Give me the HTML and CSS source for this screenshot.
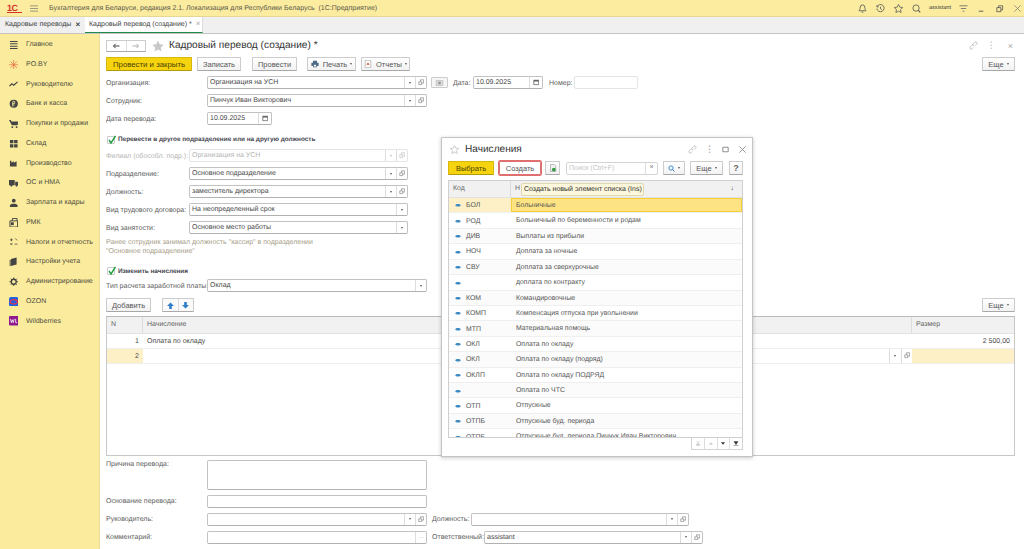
FILE: index.html
```html
<!DOCTYPE html>
<html lang="ru">
<head>
<meta charset="utf-8">
<title>Кадровый перевод</title>
<link rel="stylesheet" href="styles.css">
</head>
<body>
<svg class="defs" width="0" height="0" aria-hidden="true">
  <symbol id="open" viewBox="0 0 8 8"><path d="M1 3.500h3.500V7H1zM3 3V1h4v4H5" fill="none" stroke="#888" stroke-width=".9"/></symbol>
  <symbol id="cal" viewBox="0 0 8 8"><path d="M1 1.500h6v5.500H1z" fill="none" stroke="#555" stroke-width=".9"/><path d="M1 1.500h6v1.700H1z" fill="#555"/></symbol>
  <symbol id="link" viewBox="0 0 10 10"><path d="M1.500 8.500a1.300 1.300 0 0 1 0-2l1.500-1.500a1.300 1.300 0 0 1 2 0M8.500 1.500a1.300 1.300 0 0 0-2 0L5 3a1.300 1.300 0 0 0 0 2M1.500 8.500a1.300 1.300 0 0 0 2 0L5 7M8.500 1.500a1.300 1.300 0 0 1 0 2L7 5" fill="none" stroke="#aaa" stroke-width=".8"/></symbol>
  <symbol id="star" viewBox="0 0 12 12"><path d="M6 .5l1.700 3.700 4 .5-3 2.700.8 4L6 9.500l-3.500 1.900.8-4-3-2.700 4-.5z"/></symbol>
  <symbol id="rowdot" viewBox="0 0 7 5"><path d="M0 2.500L2 1h3l2 1.500L5 4H2z" fill="#3c8ac4"/></symbol>
</svg>

<div class="app">
  <header class="topbar">
    <span class="logo">1С</span>
    <svg class="burger" viewBox="0 0 9 7"><path d="M0 .5h9M0 3.500h9M0 6.500h9" stroke="#777" stroke-width=".8"/></svg>
    <span class="apptitle">Бухгалтерия для Беларуси, редакция 2.1. Локализация для Республики Беларусь&nbsp; (1С:Предприятие)</span>
    <div class="topicons">
      <svg class="ti" viewBox="0 0 10 10"><path d="M5 1a2.500 2.500 0 0 0-2.500 2.500c0 2.500-1.300 3.500-1.300 4h7.600c0-.5-1.300-1.500-1.300-4A2.500 2.500 0 0 0 5 1zM4 9h2" fill="none" stroke="#555" stroke-width=".9"/></svg>
      <svg class="ti" viewBox="0 0 10 10"><path d="M1.300 3a4 4 0 1 1-.3 2M1 1.300V3.200h1.900M5 3v2.300l1.500 1" fill="none" stroke="#555" stroke-width=".9"/></svg>
      <svg class="ti" viewBox="0 0 12 12"><use href="#star" fill="none" stroke="#555"/></svg>
      <svg class="ti" viewBox="0 0 10 10"><circle cx="4.500" cy="4.500" r="3.500" fill="none" stroke="#555" stroke-width=".9"/><path d="M7 7l2.200 2.200" stroke="#555" stroke-width="1.200"/></svg>
      <span class="user">assistant</span>
      <svg class="ti" viewBox="0 0 10 10"><path d="M.5 2h9M2 5h6M4 8h2" stroke="#666" stroke-width=".9"/></svg>
      <svg class="ti wc" viewBox="0 0 10 10"><path d="M2 8h5" stroke="#555" stroke-width="1"/></svg>
      <svg class="ti wc" viewBox="0 0 10 10"><path d="M2 4h4.500v4.500H2zM4 4V2h4.500v4.500H6.500" fill="none" stroke="#555" stroke-width=".9"/></svg>
      <svg class="ti wc" viewBox="0 0 10 10"><path d="M1.500 1.500l7 7M8.500 1.500l-7 7" stroke="#777" stroke-width=".8"/></svg>
    </div>
  </header>

  <nav class="tabs">
    <div class="tab">Кадровые переводы <span class="tabx dark">×</span></div>
    <div class="tab active">Кадровый перевод (создание) * <span class="tabx">×</span></div>
  </nav>

  <div class="body">
    <aside class="side">
      <div class="sitem"><svg class="si" viewBox="0 0 10 10"><path d="M1 1.500h8M1 4h8M1 6.500h8M1 9h8" stroke="#444" stroke-width="1.100"/></svg>Главное</div>
      <div class="sitem"><svg class="si" viewBox="0 0 10 10"><path d="M5 0v10M0 5h10M1.500 1.500l7 7M8.500 1.500l-7 7" stroke="#e2603a" stroke-width=".7"/></svg>PO.BY</div>
      <div class="sitem"><svg class="si" viewBox="0 0 10 10"><path d="M.5 7.500l2.500-2.500 2 1.500 4-3.500" fill="none" stroke="#444" stroke-width="1.300"/></svg>Руководителю</div>
      <div class="sitem"><svg class="si" viewBox="0 0 10 10"><circle cx="5" cy="5" r="4.300" fill="#444"/><path d="M4 8V2.500h2v2.200H3.300M3.300 6.300h2.500" fill="none" stroke="#fbed9d" stroke-width=".8"/></svg>Банк и касса</div>
      <div class="sitem"><svg class="si" viewBox="0 0 10 10"><path d="M0 1h2l.5 1.500h7.500L9 6.500H3z" fill="#444"/><circle cx="3.500" cy="8.500" r="1" fill="#444"/><circle cx="8" cy="8.500" r="1" fill="#444"/></svg>Покупки и продажи</div>
      <div class="sitem"><svg class="si" viewBox="0 0 10 10"><path d="M1 1h3.600v3.600H1zM5.400 1H9v3.600H5.400zM1 5.400h3.600V9H1zM5.400 5.400H9V9H5.400z" fill="#444"/></svg>Склад</div>
      <div class="sitem"><svg class="si" viewBox="0 0 10 10"><path d="M1 9V3h1.500v2L5 3.500V5l3-1.500V9z" fill="#444"/></svg>Производство</div>
      <div class="sitem"><svg class="si" viewBox="0 0 10 10"><path d="M0 2h6v5.500H0zM6.500 4H9l1 1.800v1.700H6.500z" fill="#444"/><circle cx="2.500" cy="8" r="1.100" fill="#444"/><circle cx="8" cy="8" r="1.100" fill="#444"/></svg>ОС и НМА</div>
      <div class="sitem"><svg class="si" viewBox="0 0 10 10"><circle cx="5" cy="2.800" r="2" fill="#444"/><path d="M1 9.500V8c0-1.300 2-2 4-2s4 .7 4 2v1.500z" fill="#444"/></svg>Зарплата и кадры</div>
      <div class="sitem"><svg class="si" viewBox="0 0 10 10"><path d="M1 3h8v6.500H1zM3.500 3V.5h5V3" fill="none" stroke="#444" stroke-width="1"/><path d="M2 4.500h3v3H2z" fill="#444"/></svg>РМК</div>
      <div class="sitem"><svg class="si" viewBox="0 0 10 10"><path d="M1 3h3M2.500 1.500v3M6 7.500h3M1.500 6.500l2 2M3.500 6.500l-2 2M6.500 1.500l2 2" stroke="#444" stroke-width=".8"/></svg>Налоги и отчетность</div>
      <div class="sitem"><svg class="si" viewBox="0 0 10 10"><path d="M2 2l6-1.500V8L2 9.500z" fill="#444"/><path d="M1.200 3v6.500" stroke="#444"/></svg>Настройки учета</div>
      <div class="sitem"><svg class="si" viewBox="0 0 10 10"><circle cx="5" cy="5" r="2.600" fill="none" stroke="#444" stroke-width="1.400"/><path d="M5 .5v2M5 7.500v2M.5 5h2M7.500 5h2M1.800 1.800l1.400 1.400M6.800 6.800l1.400 1.400M8.200 1.800L6.800 3.200M3.200 6.800L1.800 8.200" stroke="#444" stroke-width="1"/></svg>Администрирование</div>
      <div class="sitem"><svg class="si" viewBox="0 0 10 10"><rect width="10" height="10" rx="2" fill="#1f62e0"/><ellipse cx="5" cy="5" rx="3.800" ry="2.300" fill="none" stroke="#e8304c" stroke-width="1.300"/></svg>OZON</div>
      <div class="sitem"><svg class="si" viewBox="0 0 10 10"><rect width="10" height="10" rx="1" fill="#8f1a8f"/><path d="M1.500 3l1 4 1-3 1 3 1-4M7 3v4h1.500" fill="none" stroke="#fff" stroke-width=".8"/></svg>Wildberries</div>
    </aside>

    <main class="main">
      <div class="titlerow">
        <div class="navbtns">
          <span class="navb"><svg viewBox="0 0 9 7"><path d="M8.500 3.500H2M4 1L1.500 3.500 4 6" fill="none" stroke="#333" stroke-width="1.100"/></svg></span>
          <span class="navb"><svg viewBox="0 0 9 7"><path d="M.5 3.500H7M5 1l2.500 2.500L5 6" fill="none" stroke="#aaa" stroke-width="1.100"/></svg></span>
        </div>
        <svg class="bigstar" viewBox="0 0 12 12"><use href="#star" fill="#c8c8c8"/></svg>
        <h1 class="doctitle">Кадровый перевод (создание) *</h1>
        <div class="winicons">
          <svg class="wi" viewBox="0 0 10 10"><use href="#link"/></svg>
          <span class="wdots">⋮</span>
          <span class="wx">×</span>
        </div>
      </div>

      <div class="toolbar">
        <button class="btn primary w86 large">Провести и закрыть</button>
        <button class="btn w44 ml5">Записать</button>
        <button class="btn w45 ml11">Провести</button>
        <button class="btn w49 ml10"><svg class="bi" viewBox="0 0 10 10"><path d="M2.500 1h5v2.500h-5zM.5 3.500h9v4h-2V9h-5V7.500h-2z" fill="#4a6a85"/><path d="M3.500 6h3v2.200h-3z" fill="#fff"/></svg>Печать <i class="tri"></i></button>
        <button class="btn w49 ml5"><svg class="bi" viewBox="0 0 10 10"><path d="M1.500 .5h7v9h-7z" fill="#fff" stroke="#999" stroke-width=".7"/><path d="M3 6l2-3 2 3z" fill="#d0452f"/></svg>Отчеты <i class="tri"></i></button>
        <button class="btn w33 push">Еще <i class="tri"></i></button>
      </div>

      <div class="row r1">
        <label class="lbl l101">Организация:</label>
        <div class="field w220"><span class="val">Организация на УСН</span><span class="cell"><i class="tri"></i></span><span class="cell"><svg class="ci"><use href="#open"/></svg></span></div>
        <button class="docbtn"><svg viewBox="0 0 10 7"><path d="M1 .5h8v6H1z" fill="#ddd" stroke="#aaa" stroke-width=".6"/><path d="M3.500 2h3v3h-3z" fill="#999"/></svg></button>
        <label class="lbl ml5 date-l">Дата:</label>
        <div class="field w70"><span class="val">10.09.2025</span><span class="cell c-w"><svg class="ci"><use href="#cal"/></svg></span></div>
        <label class="lbl ml6 num-l">Номер:</label>
        <div class="field w64 pale"></div>
      </div>
      <div class="row">
        <label class="lbl l101">Сотрудник:</label>
        <div class="field w220"><span class="val">Пинчук Иван Викторович</span><span class="cell"><i class="tri"></i></span><span class="cell"><svg class="ci"><use href="#open"/></svg></span></div>
      </div>
      <div class="row">
        <label class="lbl l101">Дата перевода:</label>
        <div class="field w65"><span class="val">10.09.2025</span><span class="cell c-w"><svg class="ci"><use href="#cal"/></svg></span></div>
      </div>

      <div class="check c1"><span class="box"><svg viewBox="0 0 10 10"><path d="M2 5l2 3 4.500-7" fill="none" stroke="#1f9d3f" stroke-width="1.400"/></svg></span><b>Перевести в другое подразделение или на другую должность</b></div>

      <div class="row">
        <label class="lbl l83 faint">Филиал (обособл. подр.):</label>
        <div class="field w219 pale"><span class="val faint">Организация на УСН</span><span class="cell"><i class="tri lt"></i></span><span class="cell"><svg class="ci lt"><use href="#open"/></svg></span></div>
      </div>
      <div class="row">
        <label class="lbl l83">Подразделение:</label>
        <div class="field w219"><span class="val">Основное подразделение</span><span class="cell"><i class="tri"></i></span><span class="cell"><svg class="ci"><use href="#open"/></svg></span></div>
      </div>
      <div class="row">
        <label class="lbl l83">Должность:</label>
        <div class="field w219"><span class="val">заместитель директора</span><span class="cell"><i class="tri"></i></span><span class="cell"><svg class="ci"><use href="#open"/></svg></span></div>
      </div>
      <div class="row">
        <label class="lbl l83">Вид трудового договора:</label>
        <div class="field w219"><span class="val">На неопределенный срок</span><span class="cell"><i class="tri"></i></span></div>
      </div>
      <div class="row">
        <label class="lbl l83">Вид занятости:</label>
        <div class="field w219"><span class="val">Основное место работы</span><span class="cell"><i class="tri"></i></span></div>
      </div>

      <p class="note">Ранее сотрудник занимал должность "кассир" в подразделении<br>"Основное подразделение"</p>

      <div class="check c2"><span class="box"><svg viewBox="0 0 10 10"><path d="M2 5l2 3 4.500-7" fill="none" stroke="#1f9d3f" stroke-width="1.400"/></svg></span><b>Изменить начисления</b></div>

      <div class="row">
        <label class="lbl l101">Тип расчета заработной платы:</label>
        <div class="field w220"><span class="val">Оклад</span><span class="cell"><i class="tri"></i></span></div>
      </div>

      <div class="toolbar t2">
        <button class="btn w45">Добавить</button>
        <div class="arrows">
          <span class="arr"><svg viewBox="0 0 8 8"><path d="M4 .5L8 4.500H5.500V8h-3V4.500H0z" fill="#2f80c8"/></svg></span>
          <span class="arr"><svg viewBox="0 0 8 8"><path d="M4 7.500L8 3.500H5.500V0h-3v3.500H0z" fill="#2f80c8"/></svg></span>
        </div>
        <button class="btn w33 push">Еще <i class="tri"></i></button>
      </div>

      <div class="table">
        <div class="thead">
          <div class="th c-n">N</div>
          <div class="th c-name">Начисление</div>
          <div class="th c-size">Размер</div>
        </div>
        <div class="tr">
          <div class="td c-n num">1</div>
          <div class="td c-name">Оплата по окладу</div>
          <div class="td c-size num">2 500,00</div>
        </div>
        <div class="tr">
          <div class="td c-n num hl">2</div>
          <div class="td c-name editing"><span class="cell"><i class="tri"></i></span><span class="cell"><svg class="ci"><use href="#open"/></svg></span></div>
          <div class="td c-size hl"></div>
        </div>
      </div>

      <div class="row tall">
        <label class="lbl l101 top">Причина перевода:</label>
        <div class="field w220 high"></div>
      </div>
      <div class="row">
        <label class="lbl l101">Основание перевода:</label>
        <div class="field w220"></div>
      </div>
      <div class="row">
        <label class="lbl l101">Руководитель:</label>
        <div class="field w220"><span class="val"></span><span class="cell"><i class="tri"></i></span><span class="cell"><svg class="ci"><use href="#open"/></svg></span></div>
        <label class="lbl ml5 pos-l">Должность:</label>
        <div class="field w218"><span class="val"></span><span class="cell"><i class="tri"></i></span><span class="cell"><svg class="ci"><use href="#open"/></svg></span></div>
      </div>
      <div class="row">
        <label class="lbl l101">Комментарий:</label>
        <div class="field w220"><span class="val"></span><span class="cell dots">...</span></div>
        <label class="lbl ml5 resp-l">Ответственный:</label>
        <div class="field w219"><span class="val">assistant</span><span class="cell"><i class="tri"></i></span><span class="cell"><svg class="ci"><use href="#open"/></svg></span></div>
      </div>
    </main>
  </div>
</div>

<section class="dialog">
  <div class="dhead">
    <svg class="dstar" viewBox="0 0 12 12"><use href="#star" fill="none" stroke="#bbb"/></svg>
    <h2 class="dtitle">Начисления</h2>
    <div class="dicons">
      <svg class="wi" viewBox="0 0 10 10"><use href="#link"/></svg>
      <span class="ddots">⋮</span>
      <svg class="wi" viewBox="0 0 10 10"><path d="M2 2.500h6v5H2z" fill="none" stroke="#777" stroke-width=".9"/></svg>
      <svg class="wi" viewBox="0 0 10 10"><path d="M1.500 1.500l7 7M8.500 1.500l-7 7" stroke="#777" stroke-width=".8"/></svg>
    </div>
  </div>
  <div class="dbar">
    <button class="btn primary d46">Выбрать</button>
    <button class="btn create">Создать</button>
    <button class="btn d15"><svg class="bi0" viewBox="0 0 10 10"><path d="M2 .5h4.500L8.500 2.500V9.500H2z" fill="#f4f4f4" stroke="#888" stroke-width=".7"/><circle cx="6" cy="7" r="2.300" fill="#2f9d3f"/></svg></button>
    <div class="search"><span class="sph">Поиск (Ctrl+F)</span><span class="sx">×</span></div>
    <button class="btn d22"><svg class="bi1" viewBox="0 0 10 10"><circle cx="4.300" cy="4.300" r="3" fill="none" stroke="#2f80c8" stroke-width="1.300"/><path d="M6.500 6.500l2.700 2.700" stroke="#2f80c8" stroke-width="1.400"/></svg><i class="tri"></i></button>
    <button class="btn d32">Еще <i class="tri"></i></button>
    <button class="btn d14">?</button>
  </div>
  <div class="list">
    <div class="lhead"><div class="lh1">Код</div><div class="lh2">Н<span class="sort">↓</span></div></div>
    <div class="lrow first"><div class="lc1"><svg class="rd"><use href="#rowdot"/></svg>БОЛ</div><div class="lc2">Больничные</div></div>
    <div class="lrow"><div class="lc1"><svg class="rd"><use href="#rowdot"/></svg>РОД</div><div class="lc2">Больничный по беременности и родам</div></div>
    <div class="lrow"><div class="lc1"><svg class="rd"><use href="#rowdot"/></svg>ДИВ</div><div class="lc2">Выплаты из прибыли</div></div>
    <div class="lrow"><div class="lc1"><svg class="rd"><use href="#rowdot"/></svg>НОЧ</div><div class="lc2">Доплата за ночные</div></div>
    <div class="lrow"><div class="lc1"><svg class="rd"><use href="#rowdot"/></svg>СВУ</div><div class="lc2">Доплата за сверхурочные</div></div>
    <div class="lrow"><div class="lc1"><svg class="rd"><use href="#rowdot"/></svg></div><div class="lc2">доплата по контракту</div></div>
    <div class="lrow"><div class="lc1"><svg class="rd"><use href="#rowdot"/></svg>КОМ</div><div class="lc2">Командировочные</div></div>
    <div class="lrow"><div class="lc1"><svg class="rd"><use href="#rowdot"/></svg>КОМП</div><div class="lc2">Компенсация отпуска при увольнении</div></div>
    <div class="lrow"><div class="lc1"><svg class="rd"><use href="#rowdot"/></svg>МТП</div><div class="lc2">Материальная помощь</div></div>
    <div class="lrow"><div class="lc1"><svg class="rd"><use href="#rowdot"/></svg>ОКЛ</div><div class="lc2">Оплата по окладу</div></div>
    <div class="lrow"><div class="lc1"><svg class="rd"><use href="#rowdot"/></svg>ОКЛ</div><div class="lc2">Оплата по окладу (подряд)</div></div>
    <div class="lrow"><div class="lc1"><svg class="rd"><use href="#rowdot"/></svg>ОКЛП</div><div class="lc2">Оплата по окладу ПОДРЯД</div></div>
    <div class="lrow"><div class="lc1"><svg class="rd"><use href="#rowdot"/></svg></div><div class="lc2">Оплата по ЧТС</div></div>
    <div class="lrow"><div class="lc1"><svg class="rd"><use href="#rowdot"/></svg>ОТП</div><div class="lc2">Отпускные</div></div>
    <div class="lrow"><div class="lc1"><svg class="rd"><use href="#rowdot"/></svg>ОТПБ</div><div class="lc2">Отпускные буд. периода</div></div>
    <div class="lrow"><div class="lc1"><svg class="rd"><use href="#rowdot"/></svg>ОТПБ</div><div class="lc2">Отпускные буд. периода Пинчук Иван Викторович</div></div>
  </div>
  <div class="pager">
    <span class="pg"><svg viewBox="0 0 7 6"><path d="M.5.500h6M1 5.500l2.500-4 2.500 4z" fill="#ccc" stroke="#ccc" stroke-width=".5"/></svg></span>
    <span class="pg"><svg viewBox="0 0 7 6"><path d="M1 4.500l2.500-3 2.500 3z" fill="#ccc"/></svg></span>
    <span class="pg"><svg viewBox="0 0 7 6"><path d="M1 1.500l2.500 3 2.500-3z" fill="#333"/></svg></span>
    <span class="pg"><svg viewBox="0 0 7 6"><path d="M.5 5.500h6M1 .5l2.500 4 2.500-4z" fill="#333" stroke="#333" stroke-width=".5"/></svg></span>
  </div>
  <div class="tooltip">Создать новый элемент списка (Ins)</div>
</section>
</body>
</html>
```
FILE: styles.css
```css
* { box-sizing: border-box; }
html, body { margin: 0; padding: 0; height: 549px; overflow: hidden; }
body { font-family: "Liberation Sans", Arial, sans-serif; font-size: 7px; color: #4a4a4a; background: #fff; position: relative; text-rendering: geometricPrecision; }
button { font: inherit; color: inherit; }
.defs { position: absolute; }
.app { display: flex; flex-direction: column; height: 549px; }

.topbar { height: 17px; flex: none; background: #fbec9f; border-bottom: 1px solid #e6d894; display: flex; align-items: center; }
.logo { margin-left: 7px; width: 15px; font-weight: bold; font-size: 9px; color: #d5342b; letter-spacing: -.5px; border-bottom: 1px solid #d5342b; line-height: 8px; }
.burger { width: 8px; height: 7px; margin-left: 8px; }
.apptitle { margin-left: 11px; color: #5c5a4c; white-space: nowrap; }
.topicons { margin-left: auto; display: flex; align-items: center; padding-right: 2px; }
.ti { width: 9px; height: 9px; margin-left: 9px; }
.user { margin-left: 8px; font-size: 5.600px; color: #444; margin-right: -1px; }

.tabs { height: 16.500px; flex: none; background: #f0f0f0; border-bottom: 1px solid #c4c4c4; display: flex; }
.tab { padding-left: 5px; display: flex; align-items: center; height: 15.500px; color: #444; white-space: nowrap; gap: 4px; width: 85px; flex: none; }
.tab.active { background: #fff; width: 118px; border-bottom: 1px solid #1f8a4c; border-right: 1px solid #ddd; padding-left: 4px; }
.tabx { color: #aaa; font-size: 8px; line-height: 1; }
.tabx.dark { color: #444; font-weight: bold; }

.body { flex: 1; display: flex; min-height: 0; }
.side { width: 100px; flex: none; background: #fbec9d; border-right: 1px solid #e8dca0; padding-top: 1.300px; }
.sitem { height: 19.750px; display: flex; align-items: center; color: #4f4d40; white-space: nowrap; }
.si { width: 9.500px; height: 9.500px; margin: 0 8px 0 8.500px; flex: none; }

.main { flex: 1; min-width: 0; padding: 5px 9px 0 6px; display: flex; flex-direction: column; }
.main > * { flex: none; }
.titlerow { height: 14px; display: flex; align-items: center; margin-bottom: 4.500px; }
.navbtns { display: flex; width: 40px; height: 12px; border: 1px solid #ccc; border-bottom-color: #aaa; border-radius: 1px; }
.navb { flex: 1; display: flex; align-items: center; justify-content: center; }
.navb:first-child { border-right: 1px solid #ddd; }
.navb svg { width: 8px; height: 6px; }
.bigstar { width: 12px; height: 12px; margin-left: 6px; }
.doctitle { margin: 0 0 0 5px; font-weight: normal; font-size: 10.150px; color: #333; white-space: nowrap; }
.winicons { margin-left: auto; display: flex; align-items: center; color: #aaa; padding-right: 2px; }
.wi { width: 9px; height: 9px; }
.wdots { font-size: 9px; margin-left: 9px; }
.wx { font-size: 9px; margin-left: 12px; }

.toolbar { display: flex; height: 14px; margin-bottom: 5px; }
.btn { height: 14px; border: 1px solid #ccc; border-bottom-color: #a8a8a8; border-radius: 1px; background: linear-gradient(#fff, #f2f2f2); padding: 0; display: inline-flex; align-items: center; justify-content: center; white-space: nowrap; font-size: 7.500px; color: #555; flex: none; }
.btn.primary { background: #f6d30f; border-color: #d8b80a; border-bottom-color: #b49a08; color: #4a4204; }
.btn.large { font-size: 7.800px; }
.w86 { width: 86px; } .w44 { width: 44px; } .w45 { width: 45px; } .w49 { width: 49px; } .w33 { width: 33px; }
.ml5 { margin-left: 5px; } .ml6 { margin-left: 6px; } .ml10 { margin-left: 10px; } .ml11 { margin-left: 11px; }
.push { margin-left: auto; }
.bi { width: 8px; height: 8px; margin-right: 4px; }
.tri { display: inline-block; width: 0; height: 0; border: 1.500px solid transparent; border-top: 2px solid #555; border-bottom: 0; margin-left: 3px; }
.cell .tri { margin-left: 0; }
.tri.lt { border-top-color: #bbb; }

.row { display: flex; align-items: center; height: 13px; margin-bottom: 5px; }
.lbl { flex: none; white-space: nowrap; color: #5e5e5e; padding-top: 1px; }
.l101 { width: 101px; } .l83 { width: 83px; }
.faint { color: #b5b5b5; }
.field { flex: none; height: 13px; display: flex; align-items: stretch; border: 1px solid #c2c2c2; border-bottom-color: #b0b0b0; border-radius: 2px; background: #fff; }
.field.pale { border-color: #e4e4e4; }
.w220 { width: 220px; } .w219 { width: 219px; } .w218 { width: 218px; } .w70 { width: 70px; } .w65 { width: 65px; } .w64 { width: 64px; }
.val { flex: 1; min-width: 0; padding-left: 2px; line-height: 12px; color: #4a4a4a; white-space: nowrap; overflow: hidden; }
.val.faint { color: #b5b5b5; }
.cell { width: 11px; flex: none; border-left: 1px solid #ddd; display: flex; align-items: center; justify-content: center; }
.cell.c-w { width: 13px; }
.cell.dots { width: 11px; color: #aaa; font-size: 6px; }
.ci { width: 6.500px; height: 6.500px; }
.ci.lt { opacity: .5; }
.docbtn { width: 17px; height: 11px; margin-left: 4px; padding: 0; border: 1px solid #ccc; background: #f6f6f6; border-radius: 1px; display: flex; align-items: center; justify-content: center; flex: none; }
.docbtn svg { width: 9px; height: 6px; }
.date-l { width: 20px; }
.num-l { width: 25px; }
.pos-l { width: 39px; }
.resp-l { width: 52px; }

.check { display: flex; align-items: center; height: 11px; }
.check b { font-size: 6.400px; color: #44444e; white-space: nowrap; }
.c1 { margin: 4px 0; }
.c2 { margin: 0 0 2.500px; }
.box { width: 8px; height: 8px; border: 1px solid #ccc; border-radius: 1px; margin: 0 3.500px 0 .5px; background: #fff; display: block; position: relative; }
.box svg { position: absolute; left: -.5px; top: -2px; width: 10px; height: 10px; }
.note { margin: -1px 0 9.500px; line-height: 9px; color: #a79e88; height: 18px; }

.t2 { margin-bottom: 3.500px; margin-top: 1px; }
.arrows { margin-left: 11px; display: flex; width: 32px; height: 14px; border: 1px solid #ccc; border-bottom-color: #aaa; border-radius: 1px; background: #fafafa; }
.arr { flex: 1; display: flex; align-items: center; justify-content: center; }
.arr:first-child { border-right: 1px solid #ddd; }
.arr svg { width: 7px; height: 7px; }

.table { width: 909px; height: 140px; border: 1px solid #c8c8c8; border-top-color: #bbb; margin-bottom: 4px; }
.thead { display: flex; height: 17px; background: #f1f1f1; border-bottom: 1px solid #e2e2e2; }
.th { padding-left: 4px; line-height: 16px; color: #666; border-right: 1px solid #ddd; }
.th:last-child { border-right: 0; }
.tr { display: flex; height: 15px; border-bottom: 1px solid #eee; }
.td { line-height: 15px; padding: 0 4px; color: #4a4a4a; }
.c-n { width: 36px; flex: none; }
.c-name { flex: 1; }
.c-size { width: 102px; flex: none; }
.num { text-align: right; }
.hl { background: #fdf0c6; }
.editing { display: flex; justify-content: flex-end; padding-right: 0; }
.editing .cell { height: 14px; width: 11.500px; }

.row.tall { height: 30px; margin-bottom: 5px; align-items: flex-start; }
.high { height: 30px; }
.lbl.top { padding-top: 1px; }

.dialog { position: absolute; left: 441px; top: 137px; width: 312px; height: 320px; background: #fff; border: 1px solid #c4c4c4; box-shadow: 0 1px 4px rgba(0,0,0,.22); padding: 0 10px 0 6px; }
.dhead { height: 23px; display: flex; align-items: center; }
.dstar { width: 9px; height: 9px; margin-left: 2px; }
.dtitle { margin: 0 0 0 6px; font-weight: normal; font-size: 10.100px; color: #333; white-space: nowrap; }
.dicons { margin-left: auto; display: flex; align-items: center; gap: 8px; margin-right: -5px; color: #777; }
.ddots { font-size: 9px; width: 8px; text-align: center; }
.dbar { display: flex; height: 14px; align-items: center; margin-bottom: 5px; }
.d46 { width: 46px; }
.create { width: 42px; margin-left: 5px; border: 1px solid #e0706f; outline: .5px solid #e0706f; background: #fff; }
.d15 { width: 15px; margin-left: 4px; }
.bi0 { width: 8px; height: 8px; }
.search { width: 92px; height: 13px; margin-left: 6px; display: flex; border: 1px solid #d4d4d4; border-radius: 2px; flex: none; }
.sph { flex: 1; padding-left: 2px; line-height: 11px; color: #c4c4c4; }
.sx { width: 12px; border-left: 1px solid #ddd; text-align: center; line-height: 10px; color: #777; }
.d22 { width: 22px; margin-left: 5px; }
.bi1 { width: 7px; height: 7px; }
.d32 { width: 33px; margin-left: 5px; }
.d14 { width: 14px; margin-left: 6px; font-size: 9px; font-weight: bold; color: #666; }

.list { width: 295px; height: 258px; border: 1px solid #cfcfcf; overflow: hidden; font-size: 6.900px; }
.lhead { display: flex; height: 17px; background: #f1f1f1; border-bottom: 1px solid #e2e2e2; }
.lh1 { width: 62px; padding-left: 4px; line-height: 16px; border-right: 1px solid #ddd; color: #666; }
.lh2 { flex: 1; padding-left: 4px; line-height: 16px; color: #666; display: flex; justify-content: space-between; padding-right: 8px; }
.sort { color: #444; }
.lrow { display: flex; height: 15.430px; border-bottom: 1px solid #efefef; }
.lrow:nth-of-type(even) { background: #fbfbfb; }
.lc1 { width: 62px; flex: none; display: flex; align-items: center; color: #555; padding-top: 1px; }
.lc2 { flex: 1; padding-left: 5px; line-height: 16px; color: #555; white-space: nowrap; }
.rd { width: 6px; height: 4.500px; margin: 0 5px 0 6px; flex: none; }
.lrow.first .lc1 { background: #fdf0c6; }
.lrow.first .lc2 { background: #fde383; border: 1px solid #f5cf3a; line-height: 14px; padding-left: 4px; }
.pager { width: 52px; height: 12px; margin-left: 243px; display: flex; border: 1px solid #d4d4d4; border-top: 0; }
.pg { flex: 1; display: flex; align-items: center; justify-content: center; border-left: 1px solid #ddd; }
.pg:first-child { border-left: 0; }
.pg svg { width: 6px; height: 5px; }
.tooltip { position: absolute; left: 79px; top: 45px; height: 13px; padding: 0 1px 0 2px; line-height: 11px; background: #fdf8dc; border: 1px solid #e0d9b0; border-radius: 2px; color: #333; white-space: nowrap; }
```
